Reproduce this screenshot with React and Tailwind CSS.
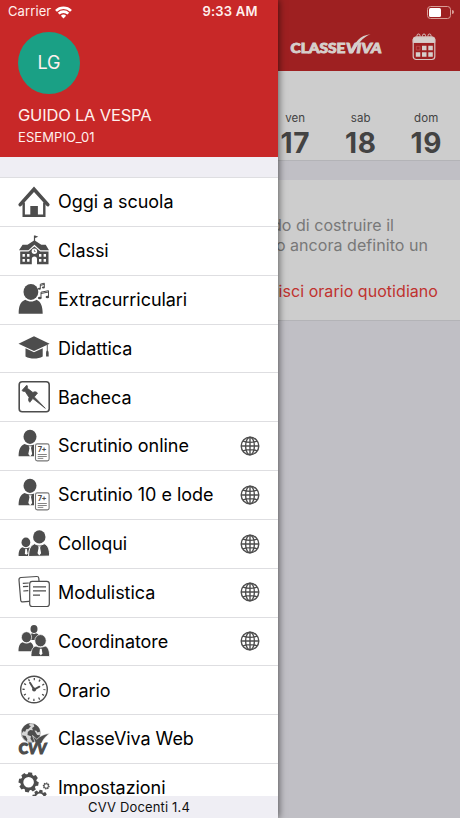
import React from 'react';

const Icon = ({ children }) => (
  <svg viewBox="0 0 32 32" className="w-8 h-8 shrink-0 overflow-visible" fill="#4d4d4d">
    {children}
  </svg>
);

const HomeIcon = () => (
  <Icon>
    <path d="M2.2 18.6 16 3.2l13.8 15.4" fill="none" stroke="#4d4d4d" strokeWidth="3.6" strokeLinecap="round" />
    <path d="M5.7 16.5V29.7H26.3V16.5" fill="none" stroke="#4d4d4d" strokeWidth="2.4" />
    <path d="M12.3 20h7.6v10h-7.6z" />
  </Icon>
);

const SchoolIcon = () => (
  <Icon>
    <path d="M15.9 1.5h1.2l3.2 1.2-3.2 1.3v4h-1.2z" />
    <path d="M16.4 6.2 23.3 10.8h4.4l3.3 5.5H22.5L16.4 10.7 10.4 16.3H1l3.6-5.5h4.9z" />
    <path fillRule="evenodd" d="M2.2 17.5h8.3l5.9-5.1 5.9 5.1h8.2v12.7H19v-5a2.6 2.6 0 0 0-5.2 0v5H2.2zM4.5 20v2.8h2.4V20zm4.6 0v2.8h2.4V20zm-4.6 5v2.8h2.4V25zm4.6 0v2.8h2.4V25zM21 20v2.8h2.4V20zm4.6 0v2.8H28V20zM21 25v2.8h2.4V25zm4.6 0v2.8H28V25z" />
    <circle cx="16.4" cy="17.3" r="2.7" fill="#fff" />
    <path d="M16.4 15.8v1.7h1.2" fill="none" stroke="#4d4d4d" strokeWidth=".7" />
  </Icon>
);

const MusicIcon = () => (
  <Icon>
    <ellipse cx="12.9" cy="8.9" rx="7.4" ry="8" />
    <path d="M.7 30.7c0-7 1.2-12 6.6-14 3.6 2.4 7.9 2.4 11.3 0 4.6 2 6.1 7 6.1 14z" />
    <path d="M22.3 5.4V1.2l4-1v4M22.3 2.4l4-1M23 14.7V9.2l7.5-1.5v6M23 10.5l7.5-1.5" fill="none" stroke="#4d4d4d" />
    <ellipse cx="21.4" cy="5.7" rx="1.5" ry="1" />
    <ellipse cx="25.4" cy="4.6" rx="1.5" ry="1" />
    <ellipse cx="21.8" cy="15" rx="1.9" ry="1.3" />
    <ellipse cx="29.4" cy="14" rx="1.8" ry="1.3" />
  </Icon>
);

const CapIcon = () => (
  <Icon>
    <path d="M.5 11.7 16 4.2l15.6 7.5L16 18.9z" />
    <path d="M7.5 16.2 16 20.3l8.7-4.1v8.2c-4.8 2.7-12.4 2.7-17.2 0z" />
    <path d="M28.8 12.8h.9v5.6c1.4 1.1.9 3.6 1 6h-2.6c.1-2.4-.4-4.9.7-6z" />
  </Icon>
);

const PinIcon = () => (
  <Icon>
    <rect x="1.2" y=".8" width="30" height="30" rx="3" fill="none" stroke="#4d4d4d" strokeWidth="1.6" />
    <path d="M8.7 4.2c1.2.8.8 2 .7 3.1l5.5 4.2c1.7-1.2 3.3-.8 4.6.6l-3.2 3.8 11 11.4-12.5-9.8-3 3.8c-1.5-1.5-1.5-3.3-.7-4.8L7 10.2c-1.1.4-2 .2-3-.8z" stroke="#4d4d4d" strokeWidth=".8" />
  </Icon>
);

const GradeIcon = () => (
  <Icon>
    <ellipse cx="12" cy="6.8" rx="6.5" ry="7.1" />
    <path d="M.6 26.3c.1-6.2 1.5-10.7 6-12.3 3.2 1.9 7.6 1.9 10.8 0 1.4.6 2.5 1.6 3.2 3V26.3z" />
    <path d="m10.7 16.2 3 0-.7 1.7 1.2 6.2-2 2.3-1.9-2.3 1.2-6.2z" fill="#fff" />
    <rect x="17.5" y="13.9" width="13.6" height="17" rx="1.8" fill="#fff" stroke="#fff" strokeWidth="3" />
    <rect x="17.5" y="13.9" width="13.6" height="17" rx="1.8" fill="#fff" stroke="#777" strokeWidth="1.1" />
    <text x="19.7" y="22.4" fontSize="7.5" fontWeight="700" fontFamily="Inter, sans-serif" textLength="9">7+</text>
    <path d="M19.7 24.5h9.1M19.7 26.5h9.1M19.7 28.4h5.6" stroke="#666" strokeWidth=".8" />
  </Icon>
);

const TalkIcon = () => (
  <Icon>
    <ellipse cx="7.9" cy="14.4" rx="4.4" ry="4.8" />
    <path d="M.6 28c0-4.8 1-7.6 3.9-8.8 2.2 1.4 4.7 1.4 6.8 0l2 2-2.1 6.8z" />
    <path d="m7.3 21 1.5 0 .8 4.3-1.4 1.8-1.3-1.8z" fill="#fff" />
    <path d="M10.6 28.5c0-6.8 1.4-11 6-12.8 2.8 1.9 6.8 1.9 9.6 0 4.2 1.8 5.4 6 5.4 12.4z" stroke="#fff" strokeWidth="1" />
    <ellipse cx="21.3" cy="8.9" rx="6.2" ry="6.6" />
    <path d="m20 18.2 2.8 0-.7 1.6 1 5.4-1.8 2.4-1.8-2.4 1.1-5.4z" fill="#fff" />
  </Icon>
);

const FormsIcon = () => (
  <Icon>
    <g fill="#fff" stroke="#4d4d4d" strokeWidth="1.2">
      <path d="m3 1.5 15.7-1q2-.1 2.1 1.7l1.6 22.2-17.5 1.5q-2 .2-2.2-1.8L1 4q-.2-2.3 2-2.5z" />
      <path d="M4.8 7.4l6-.4M5 10.7l5.3-.4M5.3 15l5-.4" />
      <rect x="11.7" y="5.4" width="19.6" height="25.1" rx="2.5" />
      <path d="M15 10.8h13M15 14.8h13M15 19.2h7" />
    </g>
  </Icon>
);

const GroupIcon = () => (
  <Icon>
    <ellipse cx="16" cy="4" rx="3.5" ry="3.9" />
    <path d="M12 15c0-4 .4-6 2-6.7q2 1.2 4 0c3 .8 3.8 3 3.8 6.7z" />
    <ellipse cx="8.5" cy="12.2" rx="5.1" ry="5.5" stroke="#fff" strokeWidth=".7" />
    <path d="M.5 26.3c0-5.1 1.2-8 4.2-9 2.7 1.6 5 1.6 7.6 0 2.6 1 3.5 4 3.5 9z" />
    <path d="M13 31.5c0-5.8 1.1-9.4 5-10.5 2.8 1.5 6.3 1.5 9.2 0 3.4 1.3 4.4 5 4.4 10.5z" stroke="#fff" strokeWidth=".8" />
    <ellipse cx="22.5" cy="15.7" rx="5.7" ry="6.1" stroke="#fff" strokeWidth=".7" />
    <path d="m21.9 23.8 1.8 0 .7 4.8-1.5 2-1.6-2z" fill="#fff" />
  </Icon>
);

const ClockIcon = () => (
  <Icon>
    <circle cx="16" cy="15.5" r="13.3" fill="none" stroke="#4d4d4d" strokeWidth="1.4" />
    <circle cx="16" cy="15.5" r="10.4" fill="none" stroke="#4d4d4d" strokeWidth="2.2" strokeDasharray="1.3 4.145" strokeDashoffset=".65" />
    <path d="m12 8.8 4.2 6.7 5.2-2.8" fill="none" stroke="#4d4d4d" strokeWidth="1.9" strokeLinecap="round" />
    <circle cx="16.1" cy="15.6" r="2" />
  </Icon>
);

const WebIcon = () => (
  <Icon>
    <circle cx="12.8" cy="10" r="9.5" fill="#d5d5d5" stroke="#777" strokeWidth=".5" />
    <path d="M3.7 7.6C5.4 2.8 8.5.5 12.3.3l-1.6 1.8 2.2 1.1-2.6 2.7-2 .3-1.1 2.6-2.1-.6-.8 2zM15.5.8c4 1.2 6.1 4 6.7 7.6l-2.6 1.1-1.5-2-3 .5-1-3 2.2-1.6z" />
    <path d="m12 7 4.4.5 2.8 4.5 3 .3c-1 3.5-3.8 6.2-7.4 6.9l-2.3-3.4.5-2.5-3.5-1.4.3-3zM4.2 12.3l3.5.6 1.7 3.6-.5 1.7c-2.3-1.2-4-3.5-4.7-5.9z" />
    <path d="m14.5 12.5 4.3 3.8C22.5 12.5 26.5 11 31.7 10.500c-4.300 3-6.700 6-8.200 10h-6z" stroke="#fff" strokeWidth=".6" />
    <path d="M0 20h29v12H0z" fill="#fff" />
    <g fontWeight="900" fontFamily="Lato, sans-serif" stroke="#4d4d4d" strokeWidth="1.2">
      <text x=".8" y="31" textLength="9.3" lengthAdjust="spacingAndGlyphs" fontSize="14.5">C</text>
      <text x="10.2" y="31" textLength="18" lengthAdjust="spacingAndGlyphs" fontSize="14.5" fontStyle="italic">VV</text>
    </g>
  </Icon>
);

const Gear = ({ cx, cy, r, hole, tooth }) => (
  <g transform={`translate(${cx} ${cy})`}>
    <circle r={(r + hole) / 2} fill="none" stroke="#4d4d4d" strokeWidth={r - hole} />
    {[0, 45, 90, 135, 180, 225, 270, 315].map((a) => (
      <path key={a} transform={`rotate(${a + 10}) scale(${tooth})`} d="M-2.6-6.5-1.8-9.7H1.8L2.6-6.5z" />
    ))}
  </g>
);

const GearsIcon = () => (
  <Icon>
    <Gear cx={10.6} cy={10.3} r={8.2} hole={5.3} tooth={1.03} />
    <Gear cx={28.2} cy={14} r={2.7} hole={1.7} tooth={0.35} />
    <Gear cx={21.8} cy={25.5} r={5.8} hole={3.9} tooth={0.78} />
  </Icon>
);

const GlobeIcon = () => (
  <svg viewBox="0 0 20 20" className="w-5 h-5 shrink-0" fill="none" stroke="#4d4d4d" strokeWidth="1.4">
    <circle cx="10" cy="10" r="8.8" />
    <ellipse cx="10" cy="10" rx="4.4" ry="8.8" />
    <path d="M10 1.2v17.6M1.2 10h17.6M3 5.2c4.3 1.4 9.7 1.4 14 0M3 14.8c4.3-1.4 9.7-1.4 14 0" />
  </svg>
);

const menu = [
  { label: 'Oggi a scuola', icon: HomeIcon },
  { label: 'Classi', icon: SchoolIcon },
  { label: 'Extracurriculari', icon: MusicIcon },
  { label: 'Didattica', icon: CapIcon },
  { label: 'Bacheca', icon: PinIcon },
  { label: 'Scrutinio online', icon: GradeIcon, web: true },
  { label: 'Scrutinio 10 e lode', icon: GradeIcon, web: true },
  { label: 'Colloqui', icon: TalkIcon, web: true },
  { label: 'Modulistica', icon: FormsIcon, web: true },
  { label: 'Coordinatore', icon: GroupIcon, web: true },
  { label: 'Orario', icon: ClockIcon },
  { label: 'ClasseViva Web', icon: WebIcon },
  { label: 'Impostazioni', icon: GearsIcon },
];

const days = [
  { name: 'ven', num: 17 },
  { name: 'sab', num: 18 },
  { name: 'dom', num: 19 },
];

const Logo = () => (
  <svg viewBox="0 0 94 24" className="w-[94px] h-6" fill="#d6cfcb" fontFamily="Lato, sans-serif" fontWeight="900" stroke="#d6cfcb">
    <text x="1.5" y="20" fontSize="13.5" textLength="55" lengthAdjust="spacingAndGlyphs" strokeWidth=".9">CLASSE</text>
    <text x="57" y="20" fontSize="13.5" fontStyle="italic" textLength="35.5" lengthAdjust="spacingAndGlyphs" strokeWidth=".9">VIVA</text>
    <path d="M61.5 20.3C65.5 9 71 2.3 81.5 1.2 73.5 4.5 69 10 64 20.3z" stroke="none" />
  </svg>
);

const CalendarIcon = () => (
  <svg viewBox="0 0 24 28" className="w-6 h-7" fill="none" stroke="#d6c5c2">
    <rect x="1.2" y="4" width="21.6" height="22.5" rx="3" strokeWidth="1.2" />
    <path d="M1.2 9.5V6.5Q1.2 4 4 4h16q2.8 0 2.8 2.5v3z" fill="#d6cfcb" />
    <path d="M5 3.5v-1a1.5 1.5 0 0 1 3 0v1M10.500 3.500v-1a1.500 1.500 0 0 1 3 0v1M16 3.500v-1a1.500 1.500 0 0 1 3 0v1" />
    <path d="M10 12.8h4.5v4.5H10zM16.3 12.8h4.5v4.5h-4.5zM3.8 19.3h4.5v4.5H3.8zM10 19.3h4.5v4.5H10zM16.3 19.3h4.5v4.5h-4.5z" fill="#d6cfcb" stroke="none" />
    <path d="M4.3 13.3h3.7V17H4.3z" stroke="#c45350" strokeWidth=".8" />
  </svg>
);

const Today = () => (
  <main className="ml-[278px] w-[182px] h-full bg-[#c0bfc5]">
    <div className="h-[71px] bg-[#9e2021] flex justify-between items-end pl-[11px] pr-6 pb-[10px]">
      <div className="pb-1"><Logo /></div>
      <CalendarIcon />
    </div>
    <div className="h-[90px] bg-[#cdcdcd] border-b border-[#b3b3b7] flex -ml-[15.5px] pt-[39px]">
      {days.map((d) => (
        <div key={d.num} className="w-[65.5px] shrink-0 text-center text-[#434343]">
          <p className="text-[11.5px] leading-4 tracking-[0.1px]">{d.name}</p>
          <p className="text-[28px] leading-[34px] font-bold tracking-[0.5px]">{d.num}</p>
        </div>
      ))}
    </div>
    <div className="mt-[19px] h-[141px] -ml-5 bg-[#cdcdcd] border-b border-[#b3b3b7] pt-[35px] text-base leading-5 tracking-[0.05px] text-[#787878] text-right whitespace-nowrap">
      <p className="pr-[66px]">do di costruire il</p>
      <p className="pr-8">o ancora definito un</p>
      <p className="pr-[22px] pt-[26px] text-[#c0322f]">isci orario quotidiano</p>
    </div>
  </main>
);

const Drawer = () => (
  <aside className="absolute left-0 top-0 w-[278px] h-full bg-white flex flex-col shadow-[1px_0_7px_rgba(0,0,0,0.55)]">
    <div className="h-[157px] shrink-0 bg-[#c82828] text-[#fff0ed] pl-[18px] pt-8">
      <div className="w-[62px] h-[62px] rounded-full bg-[#1aa085] flex items-center justify-center text-lg">LG</div>
      <p className="mt-[11px] text-[16.5px] leading-5 tracking-[-0.2px]">GUIDO LA VESPA</p>
      <p className="mt-[2px] text-[13px] leading-5 tracking-[0.1px]">ESEMPIO_01</p>
    </div>
    <div className="h-5 shrink-0 bg-[#efeef4]" />
    <ul className="flex-1 min-h-0 overflow-hidden">
      {menu.map(({ label, icon: Glyph, web }) => (
        <li key={label} className="h-[48.85px] border-t border-[#dedee1] flex items-center pl-[17.5px] pr-[18px] pb-[0.6px] text-black">
          <Glyph />
          <span className="ml-[8.5px] flex-1 text-[18px] tracking-[-0.05px] whitespace-nowrap">{label}</span>
          {web && <GlobeIcon />}
        </li>
      ))}
    </ul>
    <div className="h-[22px] shrink-0 bg-[#efeef4] text-center text-[13px] leading-[22px] tracking-[0.15px] text-[#111]">
      CVV Docenti 1.4
    </div>
  </aside>
);

const StatusBar = () => (
  <div className="absolute inset-x-0 top-0 h-6 px-2 flex items-center text-[#fff0ed]">
    <span className="w-[47px] text-[13px] tracking-[0.1px]">Carrier</span>
    <svg viewBox="0 0 17 13" className="w-[17px] h-[13px]" fill="none" stroke="#fff" strokeWidth="2.6">
      <path d="M1 4.8a10.6 10.6 0 0 1 15 0M3.7 7.6a6.8 6.8 0 0 1 9.6 0" />
      <path d="m8.5 12.5-2.6-2.7a3.7 3.7 0 0 1 5.2 0z" fill="#fff" stroke="none" />
    </svg>
    <span className="ml-[130.5px] text-[13px] font-semibold tracking-[0.2px] whitespace-nowrap">9:33 AM</span>
    <div className="ml-auto -mr-[2px] flex items-center">
      <div className="w-6 h-[13px] border border-[#d99d96] rounded-[3.5px] p-px">
        <div className="w-3 h-full bg-white rounded-[1.5px]" />
      </div>
      <div className="w-[2px] h-1 ml-px bg-[#d99d96] rounded-r-full" />
    </div>
  </div>
);

export default function App() {
  return (
    <div className="relative w-[460px] h-[818px] overflow-hidden font-['Inter','Liberation_Sans',sans-serif]">
      <Today />
      <Drawer />
      <StatusBar />
    </div>
  );
}
